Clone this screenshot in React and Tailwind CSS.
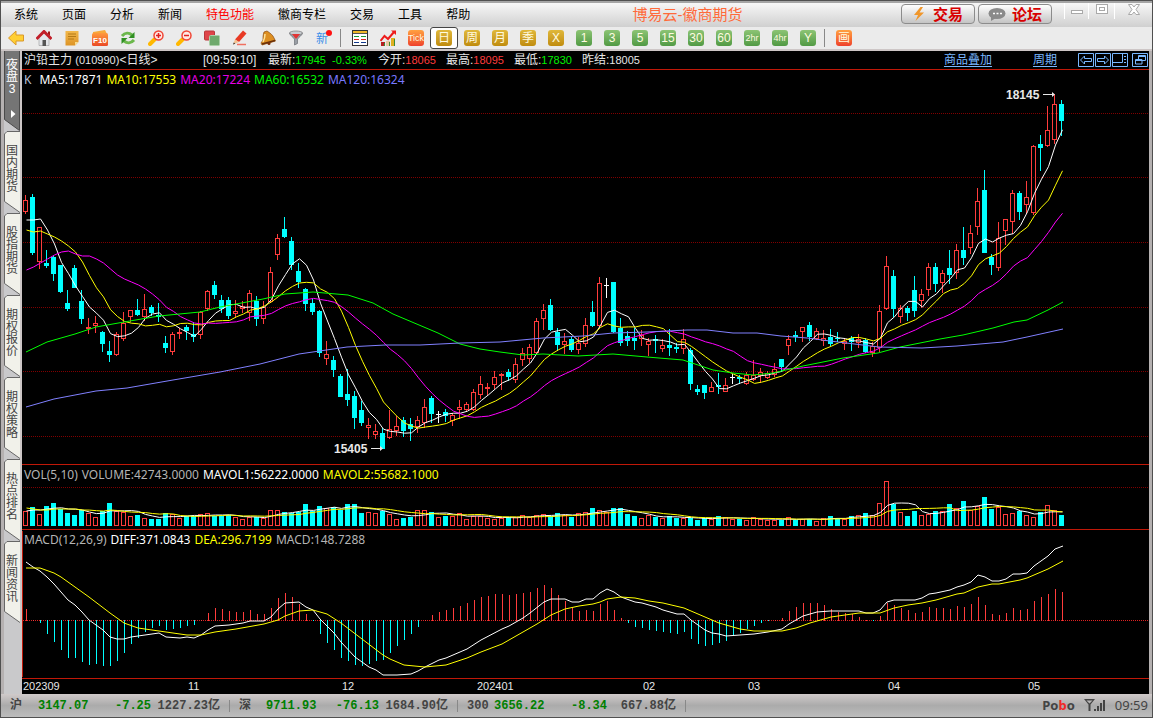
import React from "react";

// -------------------- DATA --------------------
// [kind, high, body top, body bottom, low]  u = up, d = down, f = flat
const CANDLES = [
  ["u", 195, 200, 212, 214], ["d", 194, 197, 253, 255], ["u", 227, 227, 262, 269], ["d", 250, 263, 266, 268],
  ["d", 256, 257, 274, 281], ["d", 265, 265, 292, 293], ["d", 290, 303, 309, 311], ["d", 265, 268, 288, 288],
  ["d", 290, 301, 319, 324], ["u", 318, 327, 328, 334], ["u", 316, 323, 326, 333], ["d", 331, 332, 344, 352],
  ["d", 341, 351, 355, 362], ["u", 332, 334, 355, 356], ["u", 312, 323, 339, 341], ["u", 310, 310, 317, 322],
  ["d", 299, 310, 315, 316], ["u", 294, 309, 317, 321], ["d", 305, 307, 313, 316], ["d", 303, 315, 317, 322],
  ["d", 336, 343, 348, 353], ["u", 332, 334, 352, 355], ["u", 328, 332, 334, 339], ["d", 325, 327, 331, 340],
  ["d", 322, 334, 337, 342], ["u", 311, 312, 335, 339], ["u", 290, 291, 309, 311], ["d", 281, 285, 295, 299],
  ["d", 295, 300, 309, 313], ["d", 297, 300, 316, 319], ["u", 300, 311, 314, 318], ["u", 301, 306, 309, 313],
  ["u", 290, 293, 313, 321], ["d", 296, 301, 319, 326], ["u", 301, 307, 319, 324], ["u", 267, 272, 302, 303],
  ["u", 234, 238, 255, 260], ["d", 217, 229, 237, 238], ["d", 237, 241, 265, 270], ["d", 263, 271, 282, 288],
  ["d", 288, 289, 304, 311], ["d", 299, 303, 312, 315], ["d", 310, 311, 353, 357], ["u", 341, 354, 359, 365],
  ["d", 356, 360, 370, 377], ["d", 374, 376, 397, 397], ["d", 369, 394, 400, 406], ["d", 391, 396, 418, 429],
  ["d", 401, 410, 423, 426], ["u", 418, 425, 428, 439], ["u", 424, 431, 435, 439], ["d", 428, 433, 449, 449],
  ["u", 410, 429, 438, 439], ["u", 416, 426, 431, 436], ["d", 417, 420, 431, 437], ["d", 418, 424, 429, 441],
  ["u", 416, 420, 427, 433], ["u", 399, 407, 423, 428], ["d", 396, 398, 414, 423], ["f", 411, 414, 414, 423],
  ["d", 409, 412, 416, 422], ["u", 413, 415, 421, 426], ["u", 400, 407, 410, 419], ["u", 402, 404, 410, 412],
  ["u", 389, 392, 410, 411], ["u", 376, 384, 395, 399], ["u", 383, 387, 389, 395], ["u", 371, 377, 385, 389],
  ["u", 373, 374, 376, 390], ["d", 369, 372, 377, 381], ["u", 358, 364, 380, 383], ["u", 348, 353, 360, 366],
  ["u", 344, 347, 359, 363], ["u", 318, 321, 353, 355], ["u", 304, 310, 319, 330], ["d", 299, 305, 330, 331],
  ["d", 328, 332, 345, 351], ["u", 333, 341, 345, 354], ["d", 336, 339, 350, 352], ["u", 337, 343, 350, 354],
  ["u", 318, 325, 344, 347], ["d", 301, 312, 326, 327], ["u", 277, 283, 326, 328], ["f", 278, 285, 285, 298],
  ["d", 282, 282, 332, 333], ["d", 318, 328, 343, 346], ["d", 331, 336, 341, 346], ["d", 328, 338, 341, 350],
  ["u", 330, 335, 339, 346], ["u", 338, 341, 345, 356], ["d", 335, 339, 341, 353], ["u", 339, 345, 349, 352],
  ["d", 329, 345, 348, 356], ["d", 343, 347, 349, 353], ["u", 329, 339, 349, 354], ["d", 348, 350, 384, 390],
  ["d", 385, 389, 392, 395], ["d", 385, 385, 393, 399], ["u", 382, 387, 392, 392], ["d", 373, 385, 387, 394],
  ["u", 378, 385, 392, 392], ["f", 374, 377, 377, 384], ["d", 375, 377, 379, 384], ["u", 372, 375, 384, 385],
  ["u", 360, 375, 380, 381], ["u", 368, 372, 376, 383], ["u", 371, 373, 378, 379], ["u", 363, 369, 375, 377],
  ["d", 359, 359, 367, 371], ["u", 335, 339, 346, 355], ["d", 331, 335, 337, 342], ["u", 327, 327, 332, 342],
  ["d", 322, 325, 337, 341], ["u", 328, 331, 339, 340], ["u", 330, 338, 341, 346], ["d", 329, 337, 344, 346],
  ["d", 332, 338, 339, 342], ["u", 338, 341, 344, 350], ["d", 336, 338, 342, 351], ["u", 334, 339, 343, 348],
  ["d", 338, 340, 352, 353], ["u", 342, 346, 353, 357], ["u", 305, 311, 348, 352], ["u", 256, 266, 309, 310],
  ["d", 270, 276, 309, 317], ["u", 305, 308, 317, 323], ["d", 306, 308, 313, 321], ["d", 276, 290, 311, 317],
  ["u", 289, 294, 301, 308], ["u", 263, 267, 290, 296], ["d", 263, 267, 284, 292], ["u", 270, 273, 283, 293],
  ["d", 250, 268, 275, 284], ["u", 244, 250, 273, 279], ["d", 227, 250, 258, 265], ["u", 225, 233, 248, 254],
  ["u", 188, 201, 227, 235], ["d", 170, 190, 253, 253], ["d", 254, 257, 265, 275], ["u", 222, 238, 268, 271],
  ["u", 219, 219, 231, 245], ["u", 190, 193, 222, 234], ["d", 191, 193, 212, 220], ["u", 181, 197, 205, 214],
  ["u", 145, 146, 213, 215], ["d", 135, 144, 148, 171], ["u", 106, 130, 146, 147], ["u", 94, 104, 140, 144],
  ["d", 100, 104, 121, 136],
];

const VOLUME = [
  511, 507, 514, 506, 503, 509, 513, 515, 510, 513, 517, 511, 503, 511, 512, 516, 515, 518, 519, 519,
  513, 514, 518, 516, 516, 514, 513, 516, 516, 515, 517, 519, 517, 517, 518, 510, 510, 512, 513, 512,
  504, 511, 506, 508, 507, 510, 504, 504, 513, 512, 513, 511, 514, 519, 518, 517, 510, 510, 512, 517,
  516, 516, 513, 519, 516, 516, 518, 519, 518, 517, 517, 515, 517, 515, 514, 516, 513, 515, 517, 513,
  512, 508, 510, 512, 508, 508, 514, 516, 518, 515, 517, 518, 516, 518, 518, 518, 520, 518, 519, 516,
  517, 519, 519, 520, 517, 519, 520, 520, 520, 517, 520, 519, 519, 521, 518, 516, 518, 519, 516, 515,
  513, 515, 503, 481, 504, 512, 516, 511, 515, 514, 511, 511, 504, 508, 501, 510, 506, 497, 509, 507,
  514, 513, 511, 515, 517, 512, 505, 510, 515,
];

const MACD = [
  609, 620, 623, 634, 642, 650, 658, 658, 662, 665, 664, 666, 666, 661, 653, 644, 638, 632, 628, 626,
  630, 629, 628, 626, 625, 620, 613, 608, 609, 611, 612, 612, 610, 614, 614, 608, 598, 593, 597, 604,
  614, 621, 634, 643, 650, 658, 661, 665, 666, 664, 661, 660, 653, 646, 640, 634, 627, 620, 615, 612,
  610, 608, 606, 603, 600, 597, 596, 594, 594, 595, 594, 593, 592, 588, 585, 588, 595, 601, 607, 611,
  610, 611, 604, 601, 610, 618, 623, 627, 628, 630, 631, 632, 633, 634, 632, 639, 644, 646, 645, 643,
  641, 635, 633, 629, 626, 623, 621, 620, 618, 611, 607, 603, 603, 603, 605, 609, 612, 613, 614, 617,
  620, 621, 616, 603, 605, 608, 610, 613, 612, 607, 608, 608, 609, 606, 607, 604, 597, 605, 614, 615,
  613, 608, 610, 609, 601, 597, 594, 589, 592,
];

const MA60 =
  "26,352 47,342 75,334 96,327 124,322 159,316 200,312 220,307 263,299 285,294 299,293 313,292 348,295 373,303 393,314 438,333 460,344 480,349 500,352 523,355 543,354 578,356 613,354 647,357 683,360 713,370 733,373 753,375 773,373 803,366 843,358 878,353 900,347 940,339 963,335 993,328 1014,322 1027,320 1048,310 1063,302";
const MA120 =
  "26,407 54,399 96,391 127,388 173,380 220,372 260,364 299,354 347,347 385,345 420,345 460,343 500,342 543,338 583,336 613,333 647,332 687,330 707,330 733,333 757,333 781,336 807,338 830,341 879,347 922,348 957,346 1003,342 1027,337 1063,329";
const DIFF =
  "26,562 33,567 40,571 47,577 54,584 61,592 68,600 75,605 82,612 89,620 96,625 103,630 110,637 117,639 124,639 131,637 145,635 159,633 166,637 180,638 187,637 194,638 201,635 208,630 215,626 229,625 243,623 250,621 264,621 271,617 278,609 285,603 299,602 306,607 313,610 320,619 334,633 341,642 355,657 369,667 376,670 383,675 397,675 411,674 418,671 425,667 439,660 446,658 467,649 481,640 502,629 509,626 523,618 530,613 544,602 551,599 565,599 572,602 579,602 586,599 593,599 600,593 607,589 614,592 621,597 635,602 642,603 656,607 663,610 677,614 684,614 691,620 705,630 712,633 719,634 726,636 740,635 754,634 768,632 782,629 789,624 803,616 817,612 830,611 859,611 866,613 873,613 880,610 887,602 894,600 915,600 922,598 929,594 936,593 950,590 957,587 964,585 971,582 978,575 985,577 992,581 999,581 1006,579 1013,574 1020,574 1027,573 1034,566 1048,556 1055,549 1063,546";
const DEA =
  "26,568 40,568 54,573 61,577 89,597 110,613 124,623 138,628 166,632 187,635 201,635 215,632 236,629 264,624 278,620 285,616 299,611 313,610 327,614 341,623 362,639 383,655 390,659 404,665 425,667 446,665 467,658 481,652 502,644 523,632 537,624 551,615 565,609 579,606 593,604 600,602 607,599 621,597 635,598 649,601 663,603 684,608 698,614 719,623 740,629 754,631 782,631 796,628 810,623 831,617 859,613 880,613 894,608 908,605 922,603 936,600 957,594 964,593 978,587 992,584 999,584 1020,580 1027,578 1048,569 1063,561";

const closes = CANDLES.map(([k, , top, bottom]) => (k === "u" ? top : bottom));

// moving average; `head` holds the values before n bars exist
function average(values, n, head) {
  return values
    .map((_, i) => {
      const y =
        i < n - 1
          ? head[i]
          : values.slice(i - n + 1, i + 1).reduce((a, b) => a + b, 0) / n;
      return `${26.5 + i * 7},${y.toFixed(1)}`;
    })
    .join(" ");
}

const MA5 = average(closes, 5, [220, 220, 219, 230]);
const MA10 = average(closes, 10, [230, 232, 231, 234, 237, 241, 246, 252, 262]);
const MA20 = average(closes, 20, [
  270, 267, 263, 259, 255, 252, 251, 254, 256, 256, 259, 263, 269, 275, 279, 282, 285, 289, 294,
]);
const VOL5 = average(VOLUME, 5, [511, 510, 510, 509]);
const VOL10 = average(VOLUME, 10, [508, 509, 510, 510, 509, 509, 509, 509, 510]);

const MENU = ["系统", "页面", "分析", "新闻", "特色功能", "徽商专栏", "交易", "工具", "帮助"];
const TABS = ["国内期货", "股指期货", "期权报价", "期权策略", "热点排名", "新闻资讯"];
const MONTHS = [
  ["202309", 23], ["11", 188], ["12", 342], ["202401", 477],
  ["02", 643], ["03", 748], ["04", 888], ["05", 1028],
];

const RED = "#ff3c3c";
const CYAN = "#00ffff";

// -------------------- TOOLBAR ICONS --------------------
const ICONS = {
  后退: (
    <path d="M0.5 8 8 1v4h7.5v6H8v4z" fill="#ffcf33" stroke="#d9982a" />
  ),
  首页: (
    <>
      <path d="M3 7v8.500h10V7L8 3z" fill="#e4e6ea" stroke="#888" strokeWidth="0.5" />
      <path d="M12 1.500h2V6l-2-2z" fill="#a01818" />
      <path d="M0.500 9 8 1.500 15.500 9" fill="none" stroke="#c21f2a" strokeWidth="3" />
      <path d="M6.500 10h3.500v6H6.500z" fill="#555" />
    </>
  ),
  笔记: (
    <>
      <path d="M1.500 1h13v11l-3.500 3.500H1.500z" fill="url(#gold2)" />
      <path d="M4 4h8M4 6.500h8M4 9h6" stroke="#b47a18" />
      <path d="m14.500 12-3.500 3.500V12z" fill="#f7dd91" />
    </>
  ),
  资料: (
    <>
      <path d="M1 2l12-2 2 4v10H1z" fill="#f7a93c" />
      <rect x="0" y="3" width="16" height="13" rx="1.500" fill="url(#orange)" />
      <text x="8" y="13" textAnchor="middle" fontSize="8" fontWeight="bold" fill="#fff">F10</text>
    </>
  ),
  刷新: (
    <>
      <path d="M2 6C5 2.500 9 2.500 12 5" fill="none" stroke="#6cb84c" strokeWidth="3" />
      <path d="M14.500 2V8H8.500z" fill="#2f8f22" />
      <path d="M14 10C11 13.500 7 13.500 4 11" fill="none" stroke="#6cb84c" strokeWidth="3" />
      <path d="M1.500 14V8H7.500z" fill="#2f8f22" />
    </>
  ),
  放大: (
    <>
      <path d="m6.500 9.500-4.500 4.500" stroke="#ffb800" strokeWidth="4" strokeLinecap="round" />
      <circle cx="10.500" cy="5.500" r="4.500" fill="#ffe9e4" stroke="#f04535" strokeWidth="1.500" />
      <path d="M8 5.500h5M10.500 3v5" stroke="#e02020" strokeWidth="1.500" />
    </>
  ),
  缩小: (
    <>
      <path d="m6.500 9.500-4.500 4.500" stroke="#ffb800" strokeWidth="4" strokeLinecap="round" />
      <circle cx="10.500" cy="5.500" r="4.500" fill="#ffe9e4" stroke="#f04535" strokeWidth="1.500" />
      <path d="M8 5.500h5" stroke="#e02020" strokeWidth="1.500" />
    </>
  ),
  叠加: (
    <>
      <rect x="0.500" y="1" width="10" height="9" rx="1" fill="#df4549" stroke="#b8383b" />
      <rect x="5.500" y="5.500" width="10" height="10" rx="1" fill="#6fa96c" stroke="#a9cfa6" />
    </>
  ),
  画线: (
    <>
      <path d="M3 9.500 11 0.500l3.500 3L7 12z" fill="#e83a24" />
      <path d="m3 9.500-2 5 6-2.500z" fill="#f2c191" />
      <path d="m1 14.500.8-2 1.500 1.300z" fill="#333" />
      <path d="M5 14.500h9" stroke="#f07060" strokeWidth="1.500" />
    </>
  ),
  预警: (
    <>
      <path d="M4 2 7 1c3 2 6 4 7 7l1.500 3L2 15l-1-2 2-3c0-3 0-5 1-8z" fill="#dd8f22" stroke="#8a4a10" strokeWidth="0.700" />
      <path d="M5 4c0 3-.5 5-2 8" fill="none" stroke="#ffe39a" strokeWidth="1.500" />
      <path d="m2 14 13-3.500" stroke="#6a2f08" strokeWidth="1.500" />
      <circle cx="9" cy="13.500" r="1.500" fill="#7a3008" />
    </>
  ),
  筛选: (
    <>
      <path d="M1.500 3c0 2 4.500 5 5 6v6l3-1.500V9c.5-1 5-4 5-6z" fill="#9a9fa6" stroke="#6b7077" strokeWidth="0.700" />
      <ellipse cx="8" cy="3" rx="6.500" ry="2" fill="#c8ccd0" stroke="#777" strokeWidth="0.700" />
      <path d="M4 4h8L8.500 8.500h-1z" fill="#e23535" />
    </>
  ),
  新: (
    <>
      <text x="6" y="13" textAnchor="middle" fontSize="12" fill="#3b8ee8">新</text>
      <circle cx="13" cy="3" r="3" fill="#ff1111" />
    </>
  ),
};

const LEFT_TOOLS = ["后退", "首页", "笔记", "资料", "刷新", "放大", "缩小", "叠加", "画线", "预警", "筛选", "新"];
const PERIODS = [
  ["周", "gold"], ["月", "gold"], ["季", "gold"], ["X", "gold"],
  ["1", "green"], ["3", "green"], ["5", "green"], ["15", "green"], ["30", "green"], ["60", "green"],
  ["2hr", "green"], ["4hr", "green"], ["Y", "green"],
];

const CHIP = {
  gold: "bg-linear-to-b from-[#e0b83a] to-[#c08c0c]",
  green: "bg-linear-to-b from-[#8cc474] to-[#519a44]",
  orange: "bg-linear-to-b from-[#ffa040] to-[#ee3f2c]",
};

function Chip({ text, tone }) {
  return (
    <span
      className={`flex size-4 items-center justify-center overflow-hidden rounded-[3px] leading-none text-[#fffbe0] ${CHIP[tone]} ${
        text.length > 2 ? "text-[9px]" : "text-[12px]"
      }`}
    >
      {text}
    </span>
  );
}

function ToolButton({ label, active, children }) {
  return (
    <button
      aria-label={label}
      className={`flex h-[22px] w-7 shrink-0 items-center justify-center ${
        active ? "rounded-[3px] border border-[#444] bg-white" : ""
      }`}
    >
      {children}
    </button>
  );
}

function Divider() {
  return <span className="ml-[2px] mr-[5px] h-[18px] w-px shrink-0 bg-[#888]" />;
}

function Toolbar() {
  return (
    <div className="flex h-6 items-center border-b-2 border-[#cdc6c6] bg-[#ebebeb] pl-px">
      {LEFT_TOOLS.map(name => (
        <ToolButton key={name} label={name}>
          <svg width="16" height="16" viewBox="0 0 16 16">{ICONS[name]}</svg>
        </ToolButton>
      ))}
      <Divider />
      <ToolButton label="报价列表">
        <svg width="16" height="16" viewBox="0 0 16 16" shapeRendering="crispEdges">
          <rect x="0.500" y="0.500" width="15" height="15" fill="#fff" stroke="#333" />
          <path d="M1 2h14" stroke="#f0b828" strokeWidth="2" />
          <path d="M1 3.500h14" stroke="#555" />
          <path d="M2 6.500h5M9 6.500h5" stroke="#1d9a2c" />
          <path d="M2 9.500h5M9 9.500h5" stroke="#e02020" />
          <path d="M2 12.500h5M9 12.500h5" stroke="#123a8c" />
        </svg>
      </ToolButton>
      <ToolButton label="走势图">
        <svg width="16" height="16" viewBox="0 0 16 16">
          <path d="M1 12h4v4H1z" fill="#b52020" />
          <path d="M6 11h4v5H6z" fill="#e8c8a0" />
          <path d="M11 8h4v8h-4z" fill="#e0b020" />
          <path d="M4.500 13v3M9.500 12v4M14.500 9v7" stroke="#3d8a34" />
          <path d="m0.500 11 4-5 3.500 3L14 2" fill="none" stroke="#ee1c1c" strokeWidth="2" />
          <path d="M11 0.500h5V5z" fill="#ee1c1c" />
        </svg>
      </ToolButton>
      <ToolButton label="Tick">
        <Chip text="Tick" tone="orange" />
      </ToolButton>
      <ToolButton label="日" active>
        <Chip text="日" tone="gold" />
      </ToolButton>
      {PERIODS.map(([text, tone]) => (
        <ToolButton key={text} label={text}>
          <Chip text={text} tone={tone} />
        </ToolButton>
      ))}
      <Divider />
      <ToolButton label="画">
        <Chip text="画" tone="orange" />
      </ToolButton>
    </div>
  );
}

// -------------------- MENU BAR --------------------
function MenuBar() {
  return (
    <div className="flex h-[26px] border-t-2 border-[#a5a5a5] bg-linear-to-b from-[#f7f7f7] to-[#d0d0d0] pl-[13px]">
      <nav className="flex items-center gap-6 text-[12px] leading-none">
        {MENU.map(item => (
          <button key={item} className={item === "特色功能" ? "text-[#ff0000]" : "text-black"}>
            {item}
          </button>
        ))}
      </nav>
      <h1 className="flex-1 pl-1 text-center text-[15px] leading-6 text-[#ff6a3a]">博易云-徽商期货</h1>
      <div className="flex items-start gap-[3px] pt-px">
        <button className="flex h-5 w-[74px] items-center justify-center gap-2 rounded-[4px] border border-[#8c8c8c] bg-linear-to-b from-white to-[#c4c4c4] text-[15px] leading-none font-bold text-[#d80000]">
          <svg width="12" height="14" viewBox="0 0 12 14">
            <path d="M7.500 0 1 8h4L2.500 14 11 5.500H6.500L10 0z" fill="#f0962a" />
          </svg>
          交易
        </button>
        <button className="flex h-5 w-[74px] items-center justify-center gap-[6px] rounded-[4px] border border-[#8c8c8c] bg-linear-to-b from-white to-[#c4c4c4] text-[15px] leading-none font-bold text-[#d80000]">
          <svg width="18" height="14" viewBox="0 0 18 14">
            <ellipse cx="9" cy="6.500" rx="8.500" ry="5.500" fill="#8a8a8a" />
            <path d="m3 9 0 5 5-3z" fill="#8a8a8a" />
            <path d="M5 6.500h2M8.500 6.500h2M12 6.500h2" stroke="#fff" strokeWidth="1.500" />
          </svg>
          论坛
        </button>
      </div>
      <div className="ml-3 flex h-3 text-[#a9a9a9]">
        <button aria-label="最小化" className="flex h-4 w-6 justify-center border-l border-white">
          <svg width="12" height="12" viewBox="0 0 12 12">
            <rect x="0.500" y="7.500" width="11" height="3" fill="#fff" stroke="currentColor" />
          </svg>
        </button>
        <button aria-label="还原" className="flex h-4 w-[26px] justify-center border-l border-white pt-px">
          <svg width="12" height="10" viewBox="0 0 12 10">
            <rect x="0.500" y="0.500" width="11" height="9" fill="#fff" stroke="currentColor" />
            <rect x="3.500" y="3.500" width="5" height="3" fill="none" stroke="currentColor" />
          </svg>
        </button>
        <button aria-label="关闭" className="flex h-4 w-[38px] justify-center border-l border-white pt-px">
          <svg width="12" height="11" viewBox="0 0 12 11">
            <path d="M.5.5h3.500L6 3 8 .5h3.500L8 5.500l3.500 5H8L6 8l-2 2.500H.5L4 5.500z" fill="#fff" stroke="currentColor" />
          </svg>
        </button>
      </div>
    </div>
  );
}

// -------------------- SIDE TABS --------------------
function SideTabs() {
  return (
    <aside className="flex w-[18px] shrink-0 flex-col border-r-2 border-[#cdc6c6] bg-[#c9c9cb]">
      <button className="relative block h-20 w-4 text-white">
        <svg className="absolute inset-0" width="16" height="80" viewBox="0 0 16 80">
          <path d="M0.500 -1V68.500L15.500 79.500V-1" fill="#757575" stroke="#4a4a4a" />
          <path d="m7 59 4.500 4L7 67z" fill="#fff" />
        </svg>
        <span className="absolute inset-x-0 top-2 flex flex-col items-center text-[12px] leading-3">
          <span>夜</span>
          <span>盘</span>
          <span>3</span>
        </span>
      </button>
      {TABS.map(tab => (
        <button key={tab} className="relative block h-[82px] w-4 text-[#444]">
          <svg className="absolute inset-0" width="16" height="82" viewBox="0 0 16 82">
            <path d="M16 0.500H3L0.500 3V70.500L16 81.500z" fill="#f1f1ea" />
            <path d="M16 0.500H3L0.500 3V70.500L16 81.500" fill="none" stroke="#666" />
          </svg>
          <span className="absolute inset-x-0 top-[14px] flex flex-col items-center text-[12px] leading-3">
            {tab.split("").map(ch => (
              <span key={ch}>{ch}</span>
            ))}
          </span>
        </button>
      ))}
    </aside>
  );
}

// -------------------- QUOTE LINE --------------------
function Quote({ label, value, color }) {
  return (
    <span className="w-[68px] shrink-0">
      {label}:<span className={`text-[11px] ${color}`}>{value}</span>
    </span>
  );
}

function QuoteBar() {
  return (
    <div className="flex h-[19px] items-center border-b border-[#c01808] pl-[2px] text-[12px] leading-none text-[#e6e6e6]">
      <span className="w-[179px] shrink-0">
        沪铅主力 <span className="text-[11px]">(010990)</span>&lt;日线&gt;
      </span>
      <span className="w-[65px] shrink-0">[09:59:10]</span>
      <span className="w-[110px] shrink-0">
        最新:<span className="text-[11px] text-[#00f000]">17945&nbsp; -0.33%</span>
      </span>
      <Quote label="今开" value="18065" color="text-[#ff3c3c]" />
      <Quote label="最高" value="18095" color="text-[#ff3c3c]" />
      <Quote label="最低" value="17830" color="text-[#00f000]" />
      <Quote label="昨结" value="18005" color="text-[#e6e6e6]" />
      <div className="ml-auto flex items-center pr-px text-[#7ab8ff]">
        <a href="#overlay" className="mr-[41px] underline underline-offset-2">商品叠加</a>
        <a href="#period" className="mr-[21px] underline underline-offset-2">周期</a>
        <svg width="70" height="14" viewBox="0 0 70 14" fill="none" stroke="currentColor">
          <path d="M.5.5h15v13H.5zM17.500.5h15v13h-15zM34.500.5h15v13h-15zM54.500.5h15v13h-15z" />
          <path d="m2.500 7 4-4v2.500h7v3h-7V11z" />
          <path d="m30.500 7-4-4v2.500h-7v3h7V11z" />
          <path d="M35 9.500h9.500V1M46 3.500h2M46 6.500h2M46 9.500h2" />
          <path d="M60.500 6V2.500h7v5H64M60.500 3.500h7M57.500 6.500h6.500v4.500h-6.500zM57.500 7.500h6.500" />
        </svg>
      </div>
    </div>
  );
}

// -------------------- CHARTS --------------------
function Grid({ y, color = "#800000" }) {
  return (
    <line x1="23" x2="1149" y1={y + 0.5} y2={y + 0.5} stroke={color} strokeDasharray="1 1" shapeRendering="crispEdges" />
  );
}

function Line({ points, color }) {
  return <polyline points={points} fill="none" stroke={color} strokeWidth="1" />;
}

function Bar({ kind, x, top, bottom }) {
  if (kind === "u") {
    return (
      <rect x={x - 2} y={top + 0.5} width="4" height={Math.max(bottom - top - 1, 1)} fill="none" stroke={RED} />
    );
  }
  return <rect x={x - 2.5} y={top} width="5" height={Math.max(bottom - top, 1)} fill={kind === "f" ? "#fff" : CYAN} />;
}

function Candle({ candle, index }) {
  const [kind, high, top, bottom, low] = candle;
  const x = 25.5 + index * 7;
  const color = kind === "u" ? RED : kind === "d" ? CYAN : "#fff";
  return (
    <g>
      <path d={`M${x} ${high}V${top}M${x} ${bottom}V${low}`} stroke={color} />
      <Bar kind={kind} x={x} top={top} bottom={bottom} />
    </g>
  );
}

function Legend({ items }) {
  return (
    <div className="absolute top-[3px] left-[2px] flex gap-1 font-['Noto_Sans',sans-serif] text-[12px] leading-[14px] whitespace-nowrap">
      {items.map(([text, color]) => (
        <span key={text} className={color}>{text}</span>
      ))}
    </div>
  );
}

function PricePanel() {
  return (
    <section className="relative border-b border-[#c01808]">
      <Legend
        items={[
          ["K", "mr-1 text-[#b8c0d8]"],
          ["MA5:17871", "text-white"],
          ["MA10:17553", "text-[#ffff00]"],
          ["MA20:17224", "text-[#e600e6]"],
          ["MA60:16532", "text-[#00f000]"],
          ["MA120:16324", "text-[#7878ff]"],
        ]}
      />
      <svg className="block w-full" viewBox="22 70 1127 394">
        {[113, 177, 242, 307, 371, 436].map(y => (
          <Grid key={y} y={y} />
        ))}
        <g shapeRendering="crispEdges">
          {CANDLES.map((c, i) => (
            <Candle key={i} candle={c} index={i} />
          ))}
        </g>
        <Line points={MA5} color="#ffffff" />
        <Line points={MA10} color="#ffff00" />
        <Line points={MA20} color="#ff00ff" />
        <Line points={MA60} color="#00ff00" />
        <Line points={MA120} color="#8080ff" />
        <g fill="#e8e8e8" fontSize="12" fontWeight="bold">
          <text x="1006" y="99">18145</text>
          <text x="334" y="453">15405</text>
          <path d="M1043 94h9v-2l3 2.500-3 2.500v-2h-9zM371 448h9v-2l3 2.500-3 2.500v-2h-9z" />
        </g>
      </svg>
    </section>
  );
}

function VolumePanel() {
  return (
    <section className="relative border-b border-[#c01808]">
      <Legend
        items={[
          ["VOL(5,10)", "text-[#b4b4b4]"],
          ["VOLUME:42743.0000", "text-[#b4b4b4]"],
          ["MAVOL1:56222.0000", "text-white"],
          ["MAVOL2:55682.1000", "text-[#ffff00]"],
        ]}
      />
      <svg className="block w-full" viewBox="22 465 1127 64">
        <Grid y={487} />
        <g shapeRendering="crispEdges">
          {VOLUME.map((top, i) => (
            <Bar key={i} kind={CANDLES[i][0] === "f" ? "u" : CANDLES[i][0]} x={25.5 + i * 7} top={top} bottom={526} />
          ))}
        </g>
        <Line points={VOL5} color="#ffffff" />
        <Line points={VOL10} color="#ffff00" />
      </svg>
    </section>
  );
}

function MacdPanel() {
  return (
    <section className="relative border-b border-[#c01808]">
      <Legend
        items={[
          ["MACD(12,26,9)", "text-[#b4b4b4]"],
          ["DIFF:371.0843", "text-white"],
          ["DEA:296.7199", "text-[#ffff00]"],
          ["MACD:148.7288", "text-[#b4b4b4]"],
        ]}
      />
      <svg className="block w-full" viewBox="22 530 1127 148">
        <path d="M22.500 531V677" stroke="#c01808" />
        <Grid y={620} color="#e02020" />
        <g shapeRendering="crispEdges">
          {MACD.map((y, i) => (
            <path key={i} d={`M${26.5 + i * 7} ${y <= 620 ? 621 : 620}V${y}`} stroke={y <= 620 ? RED : CYAN} />
          ))}
        </g>
        <Line points={DIFF} color="#ffffff" />
        <Line points={DEA} color="#ffff00" />
      </svg>
    </section>
  );
}

function TimeAxis() {
  return (
    <svg className="block w-full" viewBox="22 679 1127 15" fill="#e6e6e6" fontSize="11">
      {MONTHS.map(([label, x]) => (
        <text key={label} x={x} y="690">{label}</text>
      ))}
    </svg>
  );
}

// -------------------- STATUS BAR --------------------
function StatusBar() {
  const sep = <span className="mx-[9px] h-3 w-px shrink-0 bg-[#888]" />;
  return (
    <footer className="flex h-[23px] shrink-0 items-center bg-linear-to-b from-[#d0caca] via-[#ababab] to-[#bcbcbc] pr-1 pl-[9px] font-['Liberation_Mono','Noto_Sans_CJK_SC',monospace] text-[12px] leading-none font-bold whitespace-nowrap text-[#444]">
      <span className="w-7">沪</span>
      <span className="w-[50px] text-[#008000]">3147.07</span>
      <span className="w-[63px] text-right text-[#008000]">-7.25</span>
      <span className="w-[69px] text-right">1227.23亿</span>
      {sep}
      <span className="w-[27px]">深</span>
      <span className="w-[50px] text-[#008000]">9711.93</span>
      <span className="w-[63px] text-right text-[#008000]">-76.13</span>
      <span className="w-[69px] text-right">1684.90亿</span>
      {sep}
      <span className="w-[27px]">300</span>
      <span className="w-[50px] text-[#008000]">3656.22</span>
      <span className="w-[63px] text-right text-[#008000]">-8.34</span>
      <span className="w-[69px] text-right">667.88亿</span>
      {sep}
      <span className="ml-auto font-['Noto_Sans',sans-serif] text-[13px]">
        Po<span className="text-[#f02828]">b</span>o
      </span>
      <svg className="ml-[9px]" width="22" height="13" viewBox="0 0 22 13" fill="#444">
        <path d="M0 0h11L6.500 5.500V12h-2V5.500zM2.500 1.500l3 3 3-3z" fillRule="evenodd" />
        <path d="M10 10h2v2h-2zM13 7h2v5h-2zM16 4h2v8h-2zM19 1h2v11h-2z" />
      </svg>
      <span className="ml-[9px] font-['Noto_Sans',sans-serif] text-[13px] font-normal">09:59</span>
    </footer>
  );
}

export default function App() {
  return (
    <div className="flex min-h-screen flex-col border border-[#505050] bg-[#c4c4c4] font-['Liberation_Sans','Noto_Sans_CJK_SC',sans-serif]">
      <svg className="absolute size-0" aria-hidden="true">
        <defs>
          <linearGradient id="gold2" x2="0" y2="1">
            <stop offset="0" stopColor="#f2b84c" />
            <stop offset="1" stopColor="#dd9426" />
          </linearGradient>
          <linearGradient id="orange" x2="0" y2="1">
            <stop offset="0" stopColor="#ff9a3c" />
            <stop offset="1" stopColor="#ea4a26" />
          </linearGradient>
        </defs>
      </svg>
      <MenuBar />
      <Toolbar />
      <div className="flex flex-1 border-x-[3px] border-[#b5b1b1]">
        <SideTabs />
        <main className="min-w-0 flex-1 bg-black">
          <QuoteBar />
          <PricePanel />
          <VolumePanel />
          <MacdPanel />
          <TimeAxis />
        </main>
      </div>
      <StatusBar />
    </div>
  );
}
